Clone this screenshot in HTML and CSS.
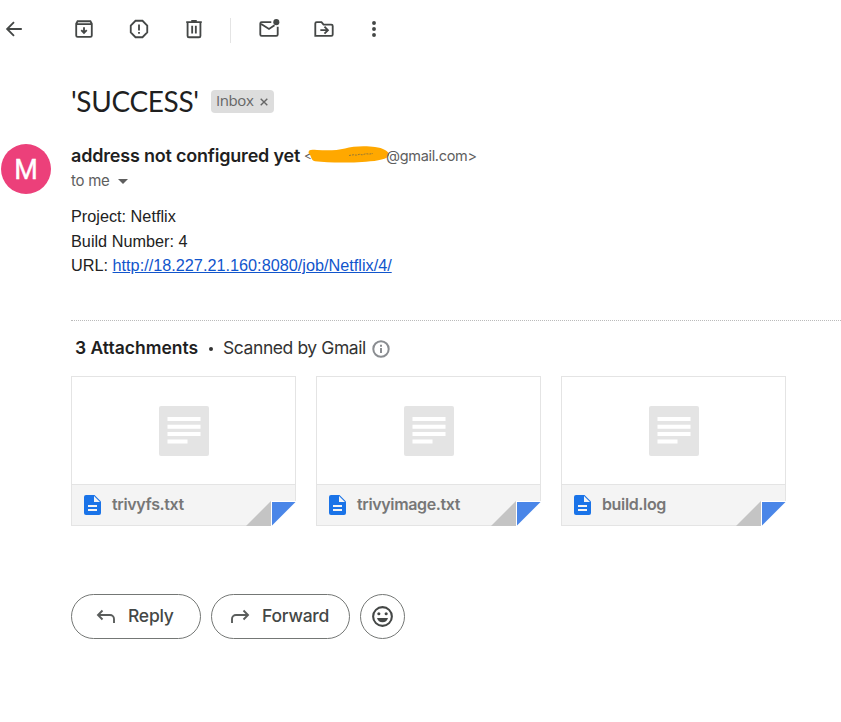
FILE: index.html
```html
<!DOCTYPE html>
<html lang="en">
<head>
<meta charset="utf-8">
<title>Inbox</title>
<link rel="stylesheet" href="styles.css">
</head>
<body>
<svg class="defs" width="0" height="0">
  <symbol id="page" viewBox="0 0 50 50"><rect width="50" height="50" rx="2" fill="#e4e4e4"/><path d="M8.500 11h33v4h-33zM8.500 18.700h33v4h-33zM8.500 26h33v4h-33zM8.500 33.500h20v4h-20z" fill="#fff"/></symbol>
  <symbol id="doc" viewBox="0 0 17 20"><path d="M2 0h8.500L17 6.500V18a2 2 0 0 1-2 2H2a2 2 0 0 1-2-2V2a2 2 0 0 1 2-2z" fill="#1a73e8"/><path d="M10 1v6h6zM4 10h9v2H4zM4 14h9v2H4z" fill="#f4f4f4"/></symbol>
  <symbol id="fold" viewBox="0 0 50 25"><path d="M25 0h25v25H25z" fill="#fff"/><path d="M0 25L25 0v25z" fill="#c4c4c4"/><path d="M26 1h23.500L26 24.500z" fill="#4a86e8"/></symbol>
</svg>
<header class="toolbar">
  <svg class="icon back" viewBox="0 0 24 24"><path d="M20.500 12H5M12 4.500L4.500 12l7.500 7.500"/></svg>
  <svg class="icon archive" viewBox="0 0 24 24"><path d="M3.500 6.300L5 3.500h14l1.500 2.800V19a1.500 1.500 0 0 1-1.500 1.500H5A1.500 1.500 0 0 1 3.500 19zM3.500 6.700h17M12 10v6M9 13.300l3 3 3-3"/></svg>
  <svg class="icon spam" viewBox="0 0 24 24"><path d="M8.200 3h7.600L21 8.200v7.600L15.800 21H8.200L3 15.800V8.200zM12 7v6.500M12 15.300v2"/></svg>
  <svg class="icon trash" viewBox="0 0 24 24"><path d="M5 5v14.500c0 .8.700 1.500 1.500 1.500h11c.8 0 1.500-.7 1.500-1.500V5M3.500 4.500h17M9 3.300h6M10 8.500v8.500M14 8.500v8.500"/></svg>
  <i class="divider"></i>
  <svg class="icon mail" viewBox="0 0 24 24"><path d="M14.500 4.500H4a1.500 1.500 0 0 0-1.500 1.500v12A1.500 1.500 0 0 0 4 19.500h16a1.500 1.500 0 0 0 1.500-1.500V9.500M3.500 6.500l8.500 5.500 6-4"/><circle cx="20" cy="4.500" r="3.300" class="solid"/></svg>
  <svg class="icon move" viewBox="0 0 24 24"><path d="M2.500 19.500V6A1.500 1.500 0 0 1 4 4.500h5.300l2.200 2.700H20a1.500 1.500 0 0 1 1.500 1.500V18a1.500 1.500 0 0 1-1.500 1.500H2.500zM8 13.300h8M12.500 9.500l3.800 3.800-3.800 3.800"/></svg>
  <svg class="icon more" viewBox="0 0 24 24"><g class="solid"><circle cx="12" cy="5.500" r="2.100"/><circle cx="12" cy="12" r="2.100"/><circle cx="12" cy="18.500" r="2.100"/></g></svg>
</header>
<main class="mail">
  <div class="subject-row"><h1><span class="subject">'SUCCESS'</span></h1><span class="label"><span class="label-name">Inbox</span><svg viewBox="0 0 8 8"><path d="M.7.7l6.600 6.600M7.300.7L.7 7.300"/></svg></span></div>
  <section class="message">
    <div class="avatar">M</div>
    <div class="content">
      <div class="sender"><strong>address not configured yet</strong><span class="lt">&lt;</span><svg class="scribble" viewBox="0 0 82 18"><path d="M.5 7C.5 3 4 3.700 9 4c12 .7 20 .3 28-1.500C45-.3 60-.2 67 1c8 1 14 4 14 8-1 4-11 6-23 6.700-18 1.300-38 1-51-.4C2.500 14.500 4 10 .5 7z" fill="#ffa800"/><path d="M41 9.500l5-.8 2 .5 4-1 2 .7 4-1.200 3 .4 4-.6" fill="none" stroke="#8c7438" stroke-width=".9" stroke-dasharray="2 1"/></svg><span class="domain">@gmail.com&gt;</span></div>
      <div class="recipient"><span>to me</span><i class="caret"></i></div>
      <div class="body">Project: Netflix<br>Build Number: 4<br>URL: <a href="#">http://18.227.21.160:8080/job/Netflix/4/</a></div>
      <div class="attach-head"><strong>3 Attachments</strong><i class="dot"></i><span class="scanned">Scanned by Gmail</span><svg class="info" viewBox="0 0 18 18"><circle cx="9" cy="9" r="7.700"/><path d="M9 8v5M9 4.700v2"/></svg></div>
      <div class="cards">
        <div class="card"><div class="preview"><svg><use href="#page"/></svg></div><div class="file"><svg class="doc"><use href="#doc"/></svg><span>trivyfs.txt</span></div><svg class="fold"><use href="#fold"/></svg></div>
        <div class="card"><div class="preview"><svg><use href="#page"/></svg></div><div class="file"><svg class="doc"><use href="#doc"/></svg><span>trivyimage.txt</span></div><svg class="fold"><use href="#fold"/></svg></div>
        <div class="card"><div class="preview"><svg><use href="#page"/></svg></div><div class="file"><svg class="doc"><use href="#doc"/></svg><span>build.log</span></div><svg class="fold"><use href="#fold"/></svg></div>
      </div>
      <div class="actions">
        <button class="reply"><svg viewBox="0 0 20 20"><path d="M6.500 3.500L2 8l4.500 4.500M2.500 8H14a4 4 0 0 1 4 4v4"/></svg><span>Reply</span></button>
        <button class="forward"><svg viewBox="0 0 20 20"><path d="M13.500 3.500L18 8l-4.500 4.500M17.500 8H6a4 4 0 0 0-4 4v4"/></svg><span>Forward</span></button>
        <button class="emoji"><svg viewBox="0 0 24 24"><circle cx="12" cy="12" r="9"/><g class="solid"><circle cx="8.500" cy="9.300" r="1.500"/><circle cx="15.500" cy="9.300" r="1.500"/><path d="M6.700 13.500h10.600a5.500 5.500 0 0 1-10.600 0z"/></g></svg></button>
      </div>
    </div>
  </section>
</main>
</body>
</html>
```

FILE: styles.css
```css
* { box-sizing: border-box; }
body { margin: 0; background: #fff; color: #1f1f1f; font-family: Inter, sans-serif; width: 841px; height: 722px; overflow: hidden; }
.defs { display: block; position: absolute; }
svg { display: block; flex: none; }
.toolbar { display: flex; align-items: center; height: 59px; padding: 0 0 1px 2.5px; }
.icon { width: 22px; height: 22px; fill: none; stroke: #444746; stroke-width: 2; }
.solid { fill: #444746; stroke: none; }
.archive { margin-left: 48px; }
.spam, .trash { margin-left: 33px; }
.divider { width: 1px; height: 25px; margin: 2px 27px 0 25.5px; background: #e4e4e4; }
.move { margin-left: 33px; }
.more { margin-left: 28px; }
.subject-row { display: flex; align-items: center; height: 34px; margin: 25px 0 25px 71px; }
h1 { margin: 0; width: 140px; font: 400 28px/34px Lato, sans-serif; letter-spacing: -.35px; white-space: nowrap; }
.label { display: flex; align-items: center; height: 23px; width: 63px; padding: 0 0 2px 5px; border-radius: 4px; background: #ddd; color: #666; font: 15px/21px "Open Sans", sans-serif; letter-spacing: -.4px; }
.label svg { width: 8px; height: 8px; margin: 3px 0 0 7px; stroke: #666; stroke-width: 1.4; }
.message { display: flex; padding-left: 1px; }
.avatar { width: 50px; height: 50px; margin-top: 1px; border-radius: 50%; background: #ec407a; color: #fff; font: 400 27px/52px Roboto, sans-serif; -webkit-text-stroke: .4px #fff; text-align: center; flex: none; }
.content { margin-left: 20px; width: 770px; }
.sender { display: flex; height: 24px; align-items: center; white-space: nowrap; color: #5e5e5e; font-size: 14.5px; }
.sender strong { width: 233px; color: #1f1f1f; font-size: 18px; font-weight: 600; letter-spacing: -.2px; }
.lt { width: 4px; font-size: 12px; }
.scribble { width: 82px; height: 18px; margin-top: -1px; }
.domain { margin-left: -4px; letter-spacing: -.32px; }
.recipient { display: flex; align-items: center; height: 26px; padding-top: 1px; font-size: 15px; letter-spacing: -.25px; color: #5e5e5e; }
.caret { border: 5px solid transparent; border-top-color: #5e5e5e; border-bottom: 0; margin: 1px 0 0 8px; }
.body { margin-top: 11px; height: 117px; border-bottom: 1px dotted #bbb; color: #222; font: 16.25px/24.5px "Liberation Sans", sans-serif; }
.body a { color: #15c; }
.attach-head { display: flex; align-items: center; height: 55px; padding: 0 0 2px 4px; font-size: 17.5px; white-space: nowrap; }
.attach-head strong { width: 134px; font-weight: 600; }
.dot { width: 4px; height: 4px; margin-top: 2px; border-radius: 50%; background: #333; }
.scanned { margin-left: 10px; width: 149px; color: #333; letter-spacing: -.42px; }
.info { width: 18px; height: 18px; margin-top: 3px; fill: none; stroke: #8a8d91; stroke-width: 2; }
.cards { display: flex; gap: 20px; }
.card { position: relative; width: 225px; height: 150px; border: 1px solid #e4e4e4; }
.preview { height: 108px; padding: 29px 87px; border-bottom: 1px solid #e4e4e4; }
.preview svg { width: 50px; height: 50px; }
.file { display: flex; align-items: center; height: 40px; padding-left: 12px; background: #f4f4f4; color: #777; font-size: 16px; font-weight: 600; letter-spacing: -.36px; }
.file span { margin-top: -2px; }
.doc { width: 17px; height: 20px; margin-right: 11px; }
.fold { position: absolute; right: -1px; bottom: -1px; width: 50px; height: 25px; }
.actions { display: flex; gap: 10px; margin-top: 68px; }
button { display: flex; align-items: center; height: 45px; border: 1px solid #747775; border-radius: 23px; background: #fff; color: #444746; padding: 0 0 1px 24px; font: 500 17.5px/42px Inter, sans-serif; letter-spacing: -.25px; }
button svg { width: 20px; height: 20px; margin: 2px 12px 0 0; fill: none; stroke: #5a5d5c; stroke-width: 1.9; }
.reply { width: 130px; }
.forward { width: 139px; padding-left: 18px; }
.emoji { width: 45px; padding: 0 0 0 9px; }
.emoji svg { width: 25px; height: 25px; margin: 0; stroke: #444746; stroke-width: 2; }
```
